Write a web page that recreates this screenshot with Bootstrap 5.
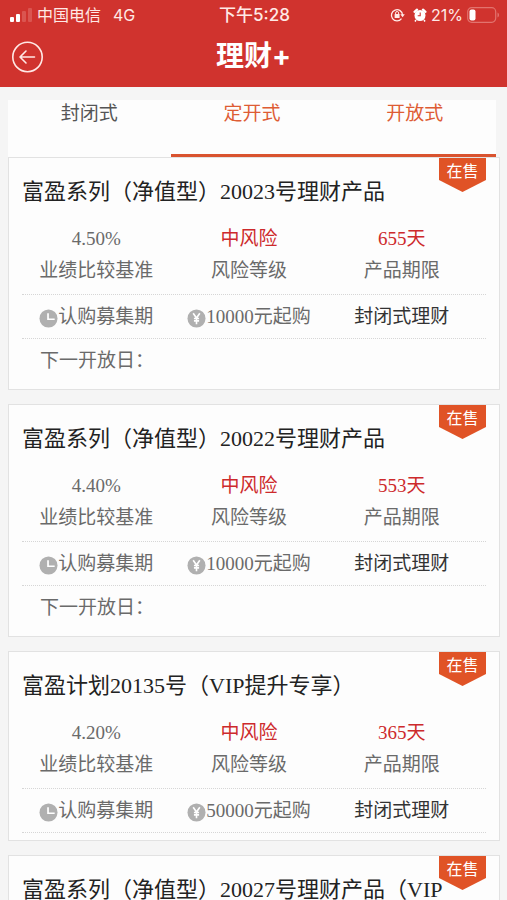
<!DOCTYPE html>
<html lang="zh-CN">
<head>
<meta charset="utf-8">
<meta name="viewport" content="width=device-width, initial-scale=1">
<title>理财+</title>
<link href="https://cdn.jsdelivr.net/npm/bootstrap@5.3.0/dist/css/bootstrap.min.css" rel="stylesheet">
<style>
  body { background: #f5f5f5; color: #6a6a6a; font-family: "Liberation Serif", "Noto Sans CJK SC", serif; font-size: 19px; }
  .app-header { background: #d0332e; color: #fff; font-family: Inter, "Noto Sans CJK SC", sans-serif; padding-bottom: 5px; }
  .status-bar { height: 30px; padding: 0 7px 0 9px; font-size: 16px; line-height: 30px; color: #ffe9e6; }
  .status-bar .clock { font-size: 17px; font-weight: 500; }
  .title-bar { height: 52px; padding: 0 11px; }
  .title-bar h1 { font-size: 28px; line-height: 52px; font-weight: 700; }
  .side { flex: 1 1 0; }
  .back-btn { line-height: 0; }
  .product-tabs { margin: 13px 11px 0 8px; background: #fdfdfd; }
  .product-tabs .nav-link { height: 57px; padding: 0; line-height: 28px; color: #555; background: none; border: 0; border-radius: 0; display: flex; justify-content: center; }
  .product-tabs .nav-link.hot { color: #de5c34; border-bottom: 3px solid #d9532f; }
  .product-list { padding: 0 7px 0 8px; gap: 14px; }
  .product { border: 1px solid #e2e2e2; border-radius: 0; background: #fdfdfd; color: inherit; padding-bottom: 7px; flex-shrink: 0; }
  .product h2 { margin: 0; padding: 0 56px 0 13px; height: 65px; font-size: 22px; line-height: 68px; font-weight: 400; color: #222; white-space: nowrap; }
  .cells { padding: 0 21px 0 11px; text-align: center; white-space: nowrap; }
  .cells .col { padding: 0; }
  .stats { line-height: 32px; padding-bottom: 7px; }
  .alert-red { color: #cd2a2c; }
  .facts { line-height: 43px; }
  .facts svg { flex: none; margin-top: 4px; }
  .kind { color: #333; }
  .product > hr.dots { margin: 0 13px; border: 0; border-top: 1px dotted #d6d6d6; opacity: 1; }
  .next-open { line-height: 43px; padding-left: 31px; }
  .ribbon { position: absolute; top: 0; right: 13px; width: 47px; height: 34px; background: #e05326; color: #fff; font-family: "Noto Sans CJK SC", sans-serif; font-size: 16px; line-height: 24px; text-align: center; clip-path: polygon(0 0, 100% 0, 100% 65%, 50% 100%, 0 65%); }
</style>
<script src="https://cdn.jsdelivr.net/npm/bootstrap@5.3.0/dist/js/bootstrap.bundle.min.js"></script>
</head>
<body>
<svg width="0" height="0" class="position-absolute" aria-hidden="true">
  <symbol id="ic-clock" viewBox="0 0 20 20"><circle cx="10" cy="10" r="9.5" fill="#b0b0b0"/><path d="M9.5 4.5v6.300h7" fill="none" stroke="#fff" stroke-width="1.8"/></symbol>
  <symbol id="ic-yen" viewBox="0 0 20 20"><circle cx="10" cy="10" r="9.5" fill="#b0b0b0"/><path d="M6.500 4.500l3.500 5 3.500-5M10 9.500v6.500M7.300 10h5.400M7.300 12.500h5.400" fill="none" stroke="#fff" stroke-width="1.7"/></symbol>
</svg>
<div class="d-flex flex-column vh-100 overflow-hidden">
  <header class="app-header flex-shrink-0">
    <div class="status-bar d-flex align-items-center">
      <div class="side d-flex align-items-center">
        <svg width="24" height="16" viewBox="0 0 24 16" class="me-1" aria-hidden="true"><rect x="1" y="10" width="4" height="5" rx="1" fill="#fff"/><rect x="7" y="7" width="4" height="8" rx="1" fill="#fff"/><rect x="13" y="4" width="4" height="11" rx="1" fill="#da5550"/><rect x="19" y="1" width="4" height="14" rx="1" fill="#da5550"/></svg>
        <span>中国电信</span><span class="ms-2 ps-1">4G</span>
      </div>
      <span class="clock">下午5:28</span>
      <div class="side d-flex align-items-center justify-content-end">
        <svg width="15" height="14" viewBox="0 0 15 14" fill="none" stroke="#ffe9e6" aria-hidden="true"><path d="M11.500 10.700A5.600 5.600 0 1 1 12.600 7" stroke-width="1.300"/><path d="M10.300 6.300h4.500l-2.200 3z" fill="#ffe9e6" stroke="none"/><rect x="4.600" y="6" width="5" height="4" rx=".5" fill="#ffe9e6" stroke="none"/><path d="M5.600 6.300V5a1.500 1.500 0 0 1 3 0v1.300"/></svg>
        <svg width="14" height="14" viewBox="0 0 14 14" class="ms-2" aria-hidden="true"><circle cx="7" cy="7.500" r="5.500" fill="#fff"/><path d="M1.600 3.800L4 1.700M12.400 3.800L10 1.700" stroke="#fff" stroke-width="2.400" stroke-linecap="round"/><path d="M3 12l-1 1.500M11 12l1 1.500" stroke="#fff" stroke-width="1.500"/><path d="M7.200 4.500v3.300H4.700" fill="none" stroke="#d0332e" stroke-width="1.100"/></svg>
        <span class="ms-1">21%</span>
        <svg width="33" height="16" viewBox="0 0 33 16" class="ms-1" aria-hidden="true"><rect x=".7" y=".7" width="28" height="14.600" rx="4" fill="none" stroke="#e2736e" stroke-width="1.200"/><rect x="2.500" y="2.600" width="6" height="10.800" rx="2" fill="#fff"/><path d="M30.500 5.500v5c2-.8 2-4.200 0-5z" fill="#e2736e"/></svg>
      </div>
    </div>
    <div class="title-bar d-flex align-items-center">
      <div class="side">
        <button type="button" class="btn p-0 border-0 back-btn" aria-label="返回">
          <svg width="32" height="34" viewBox="0 0 32 34" fill="none" stroke="#ffe9e6" stroke-width="1.600" stroke-linecap="round" stroke-linejoin="round"><circle cx="16.500" cy="18" r="14.700"/><path d="M23.500 18H9.500M15 12l-6 6 6 6"/></svg>
        </button>
      </div>
      <h1 class="m-0">理财+</h1>
      <div class="side"></div>
    </div>
  </header>

  <nav class="product-tabs nav nav-justified flex-shrink-0" aria-label="产品类型">
    <button type="button" class="nav-link nav-item">封闭式</button>
    <button type="button" class="nav-link nav-item hot">定开式</button>
    <button type="button" class="nav-link nav-item hot">开放式</button>
  </nav>

  <main class="product-list d-flex flex-column">
    <article class="product card">
      <span class="ribbon">在售</span>
      <h2>富盈系列（净值型）20023号理财产品</h2>
      <div class="cells stats row g-0">
        <div class="col"><div>4.50%</div><div>业绩比较基准</div></div>
        <div class="col"><div class="alert-red">中风险</div><div>风险等级</div></div>
        <div class="col"><div class="alert-red">655天</div><div>产品期限</div></div>
      </div>
      <hr class="dots">
      <div class="cells facts row g-0">
        <div class="col d-flex justify-content-center align-items-center"><svg width="19" height="19"><use href="#ic-clock"/></svg>认购募集期</div>
        <div class="col d-flex justify-content-center align-items-center"><svg width="19" height="19"><use href="#ic-yen"/></svg>10000元起购</div>
        <div class="col kind">封闭式理财</div>
      </div>
      <hr class="dots">
      <div class="next-open">下一开放日：</div>
    </article>

    <article class="product card">
      <span class="ribbon">在售</span>
      <h2>富盈系列（净值型）20022号理财产品</h2>
      <div class="cells stats row g-0">
        <div class="col"><div>4.40%</div><div>业绩比较基准</div></div>
        <div class="col"><div class="alert-red">中风险</div><div>风险等级</div></div>
        <div class="col"><div class="alert-red">553天</div><div>产品期限</div></div>
      </div>
      <hr class="dots">
      <div class="cells facts row g-0">
        <div class="col d-flex justify-content-center align-items-center"><svg width="19" height="19"><use href="#ic-clock"/></svg>认购募集期</div>
        <div class="col d-flex justify-content-center align-items-center"><svg width="19" height="19"><use href="#ic-yen"/></svg>10000元起购</div>
        <div class="col kind">封闭式理财</div>
      </div>
      <hr class="dots">
      <div class="next-open">下一开放日：</div>
    </article>

    <article class="product card">
      <span class="ribbon">在售</span>
      <h2>富盈计划20135号（VIP提升专享）</h2>
      <div class="cells stats row g-0">
        <div class="col"><div>4.20%</div><div>业绩比较基准</div></div>
        <div class="col"><div class="alert-red">中风险</div><div>风险等级</div></div>
        <div class="col"><div class="alert-red">365天</div><div>产品期限</div></div>
      </div>
      <hr class="dots">
      <div class="cells facts row g-0">
        <div class="col d-flex justify-content-center align-items-center"><svg width="19" height="19"><use href="#ic-clock"/></svg>认购募集期</div>
        <div class="col d-flex justify-content-center align-items-center"><svg width="19" height="19"><use href="#ic-yen"/></svg>50000元起购</div>
        <div class="col kind">封闭式理财</div>
      </div>
      <hr class="dots">
    </article>

    <article class="product card">
      <span class="ribbon">在售</span>
      <h2>富盈系列（净值型）20027号理财产品（VIP</h2>
    </article>
  </main>
</div>
</body>
</html>
